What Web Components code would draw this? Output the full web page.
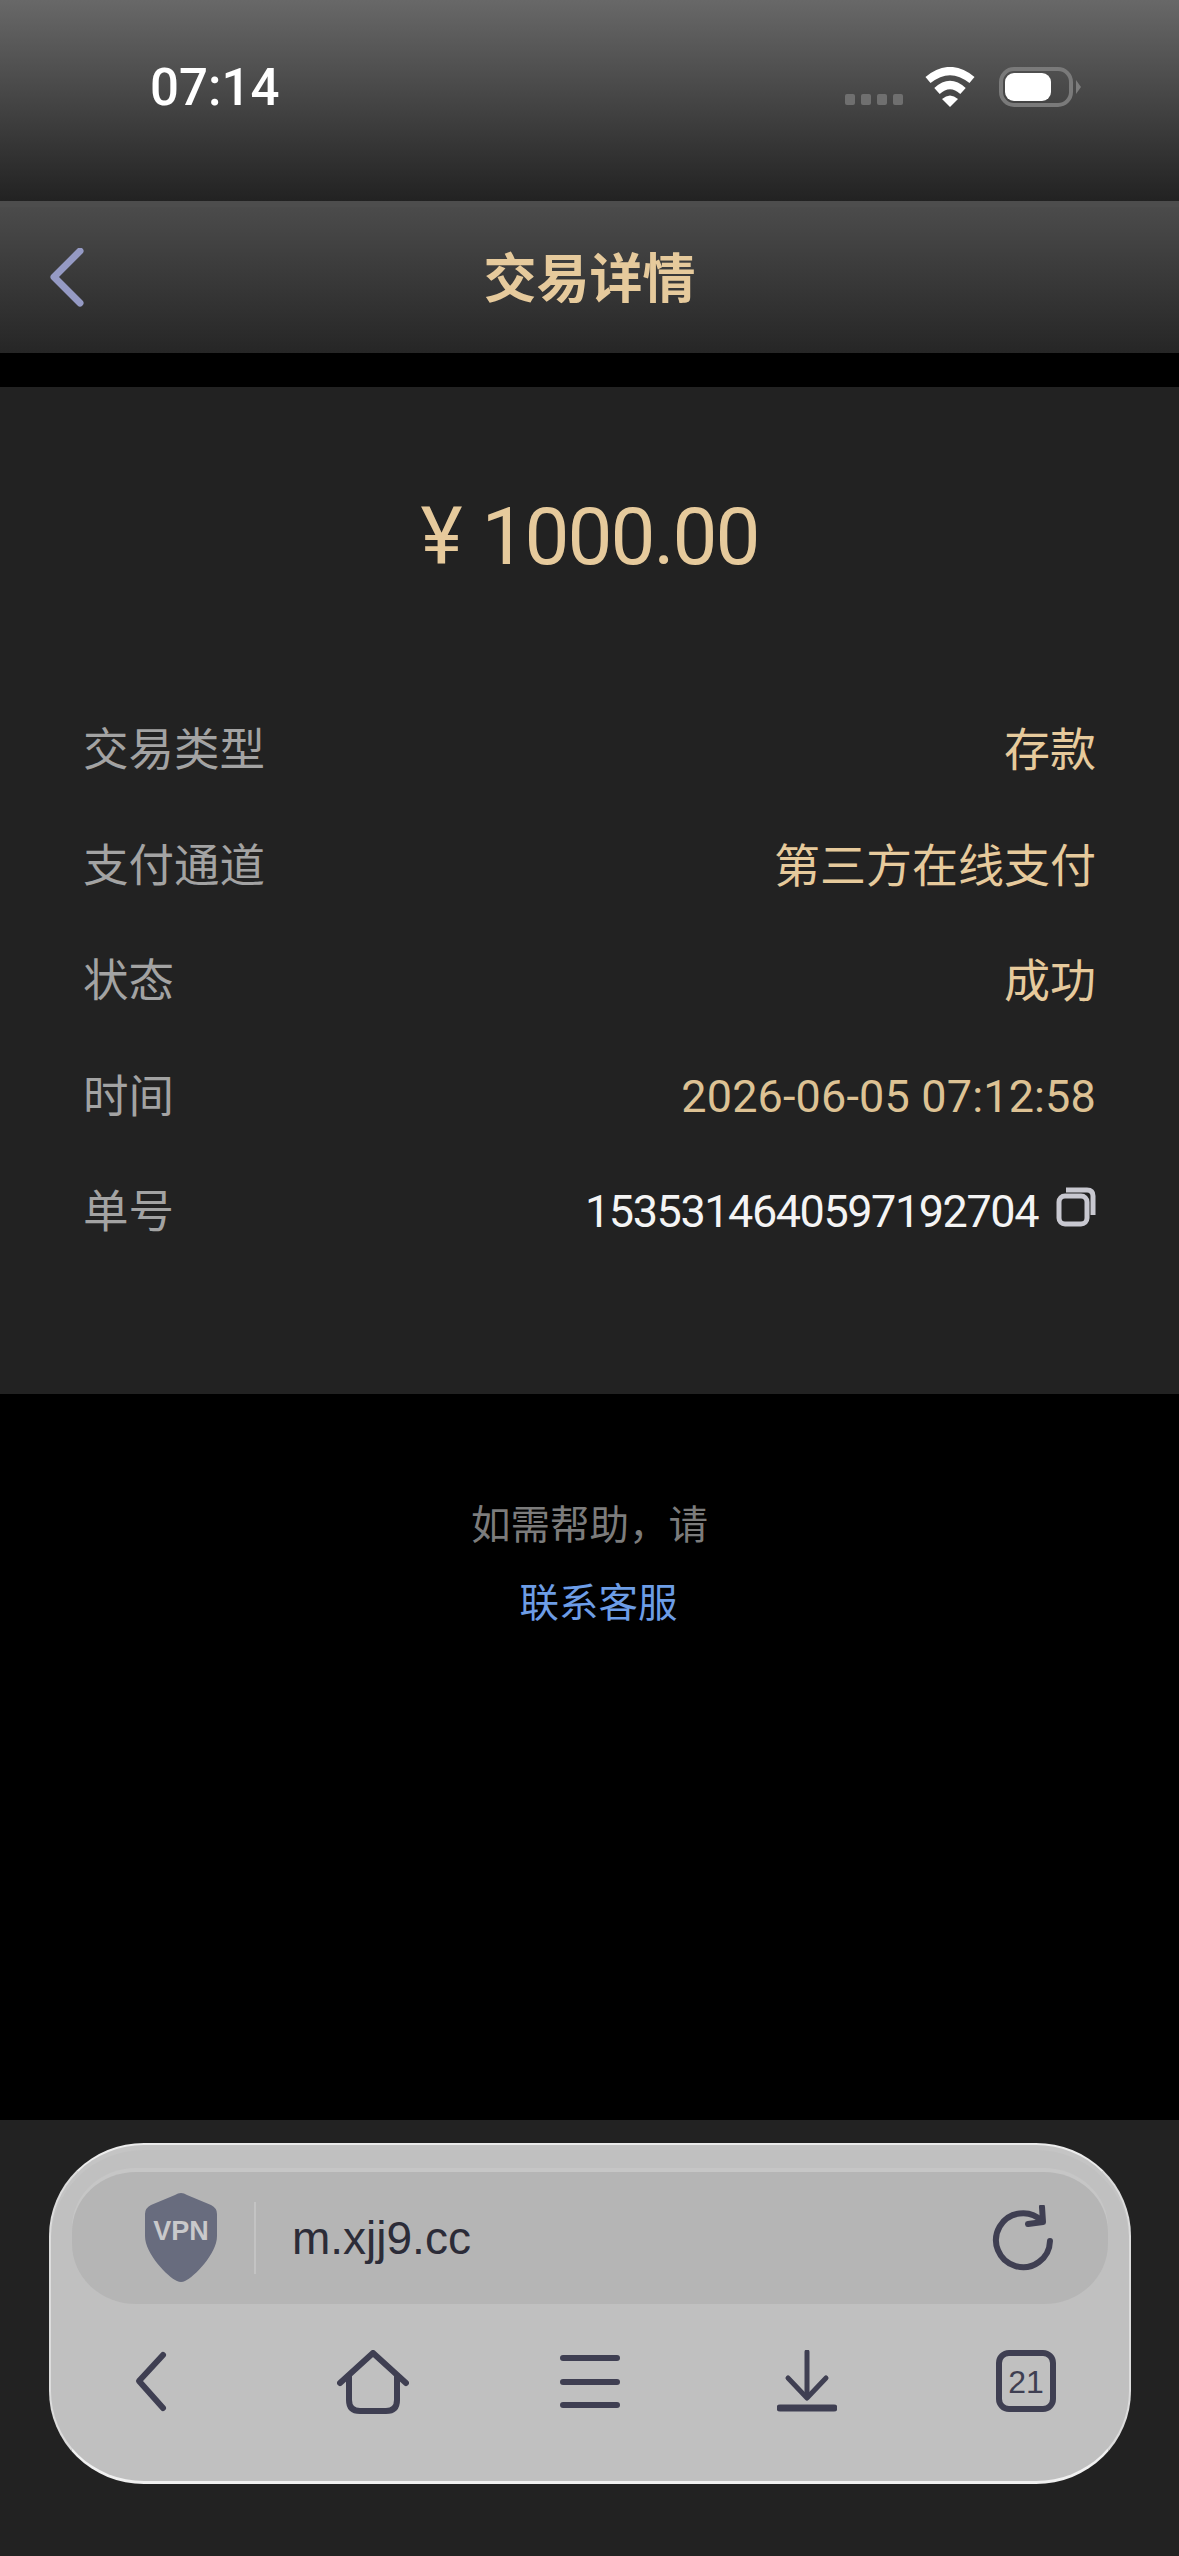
<!DOCTYPE html>
<html lang="zh">
<head>
<meta charset="utf-8">
<title>交易详情</title>
<style>
	html, body { margin: 0; padding: 0; background: #000; }
	body {
		width: 1179px;
		height: 2556px;
		display: flex;
		flex-direction: column;
		overflow: hidden;
		font-family: "Noto Sans CJK SC", "Roboto", sans-serif;
	}
	help-note { flex: 1; }
</style>
</head>
<body>
<status-bar time="07:14"></status-bar>
<nav-bar>交易详情</nav-bar>
<detail-card amount="¥ 1000.00">
	<detail-row label="交易类型">存款</detail-row>
	<detail-row label="支付通道">第三方在线支付</detail-row>
	<detail-row label="状态">成功</detail-row>
	<detail-row label="时间" variant="time">2026-06-05 07:12:58</detail-row>
	<detail-row label="单号" variant="id" copyable>1535314640597192704</detail-row>
</detail-card>
<help-note></help-note>
<browser-bar url="m.xjj9.cc" tabs="21"></browser-bar>

<script>
class StatusBar extends HTMLElement {
	connectedCallback() {
		this.attachShadow( { mode: 'open' } );
		this.shadowRoot.innerHTML = `
			<style>
				:host {
					display: flex;
					align-items: center;
					height: 201px;
					box-sizing: border-box;
					padding: 0 97px 26px 150px;
					background: linear-gradient(#686868, #222222);
				}
				.time {
					flex: 1;
					font: 500 51px/60px Roboto, sans-serif;
					color: #fff;
				}
				svg { display: block; }
			</style>
			<span class="time">${ this.getAttribute( 'time' ) }</span>
			<svg width="237" height="42" viewBox="0 0 237 42">
				<g fill="#6f6f6f">
					<rect x="0" y="27" width="10" height="11" rx="2"/>
					<rect x="16" y="27" width="10" height="11" rx="2"/>
					<rect x="32" y="27" width="10" height="11" rx="2"/>
					<rect x="48" y="27" width="10" height="11" rx="2"/>
				</g>
				<g fill="none" stroke="#fff" stroke-width="8">
					<path d="M83 13Q105-5 127 13"/>
					<path d="M92 24Q105 12 118 24"/>
				</g>
				<path d="M97 32Q105 25 113 32L105 40Z" fill="#fff"/>
				<rect x="156" y="2" width="70" height="36" rx="13" fill="none" stroke="#7a7a7a" stroke-width="4"/>
				<rect x="160" y="6" width="46" height="28" rx="9" fill="#fff"/>
				<path d="M231 13L236 20L231 27Z" fill="#7c7c7c"/>
			</svg>
		`;
	}
}

class NavBar extends HTMLElement {
	connectedCallback() {
		this.attachShadow( { mode: 'open' } );
		this.shadowRoot.innerHTML = `
			<style>
				:host {
					display: flex;
					align-items: center;
					justify-content: center;
					position: relative;
					height: 146px;
					margin-bottom: 34px;
					border-top: 6px solid #4d4d4d;
					background: linear-gradient(#4b4b4b, #262626);
					font: 700 53px/1 "Noto Sans CJK SC", sans-serif;
					color: #e6ca9c;
				}
				.title { margin-top: -9px; }
				svg { position: absolute; left: 47px; top: 41px; }
			</style>
			<svg width="40" height="60" viewBox="0 0 40 60">
				<path d="M33 3L7 29L33 55" fill="none" stroke="#959ac4" stroke-width="7" stroke-linecap="round" stroke-linejoin="round"/>
			</svg>
			<span class="title"><slot></slot></span>
		`;
	}
}

class DetailCard extends HTMLElement {
	connectedCallback() {
		this.attachShadow( { mode: 'open' } );
		const [ sign, value ] = this.getAttribute( 'amount' ).split( ' ' );
		this.shadowRoot.innerHTML = `
			<style>
				:host {
					display: block;
					height: 1007px;
					box-sizing: border-box;
					padding: 100px 83px 0;
					background: #222;
				}
				.amount {
					height: 100px;
					margin-bottom: 119px;
					display: flex;
					align-items: center;
					justify-content: center;
					gap: 21px;
					font: 400 80px/100px Roboto, sans-serif;
					letter-spacing: -2px;
					color: #e6ca9c;
				}
				.rows { display: flex; flex-direction: column; gap: 35.500px; }
			</style>
			<div class="amount"><span>${ sign }</span><span>${ value }</span></div>
			<div class="rows"><slot></slot></div>
		`;
	}
}

class DetailRow extends HTMLElement {
	connectedCallback() {
		this.attachShadow( { mode: 'open' } );
		this.shadowRoot.innerHTML = `
			<style>
				:host {
					display: flex;
					align-items: center;
					justify-content: space-between;
					height: 80px;
					font: 400 45.500px/80px "Noto Sans CJK SC", sans-serif;
					color: #a3a3a3;
				}
				.value { display: flex; align-items: center; gap: 18px; font-size: 46px; color: #e6ca9c; }
				:host([variant="time"]) .text { margin-top: 8px; font: 400 45px/80px Roboto, sans-serif; letter-spacing: 0.150px; color: #ddc294; }
				:host([variant="id"]) .text { margin-top: 8px; font: 400 45px/80px Roboto, sans-serif; letter-spacing: -1.450px; color: #f4f4f4; }
				svg { display: block; margin-top: -3px; }
			</style>
			<span>${ this.getAttribute( 'label' ) }</span>
			<span class="value"><span class="text"><slot></slot></span>${ this.hasAttribute( 'copyable' ) ? `
				<svg width="40" height="40" viewBox="0 0 40 40" fill="none" stroke="#c8c8d0" stroke-width="5">
					<rect x="3" y="9" width="28" height="28" rx="6"/>
					<path d="M10 3H31Q37 3 37 9V28"/>
				</svg>` : '' }</span>
		`;
	}
}

class HelpNote extends HTMLElement {
	connectedCallback() {
		this.attachShadow( { mode: 'open' } );
		this.shadowRoot.innerHTML = `
			<style>
				:host {
					display: flex;
					flex-direction: column;
					align-items: center;
					box-sizing: border-box;
					padding-top: 97px;
					font: 400 39.500px/62px "Noto Sans CJK SC", sans-serif;
					color: #7c7c7c;
				}
				.link { margin-top: 16px; padding-left: 18px; color: #6d9de6; }
			</style>
			<span>如需帮助，请</span>
			<span class="link">联系客服</span>
		`;
	}
}

class BrowserBar extends HTMLElement {
	connectedCallback() {
		this.attachShadow( { mode: 'open' } );
		const ink = '#3f3f52';
		this.shadowRoot.innerHTML = `
			<style>
				:host {
					display: block;
					height: 436px;
					box-sizing: border-box;
					padding: 23px 48px 0 49px;
					background: #222;
				}
				.pill {
					height: 341px;
					box-sizing: border-box;
					padding: 27px 21px 0;
					border-radius: 95px / 93px;
					background: #c0c0c0;
					border: 2px solid;
					border-color: #ececec #dcdcdc #f0f0f0;
					border-width: 2px 2px 3px;
					box-shadow: inset 0 5px 0 #c4c4c4;
				}
				.url {
					display: flex;
					align-items: center;
					height: 132px;
					padding: 0 54px 0 72px;
					border-radius: 64px / 60px;
					background: #b5b5b5;
					box-shadow: 0 -4px 0 #c6c6c6;
					font: 400 46px/1 "Liberation Sans", sans-serif;
					color: #2c2c38;
				}
				.sep { width: 2px; height: 72px; margin: 0 36px 0 36px; background: #c3c3c3; }
				.addr { flex: 1; }
				.tools {
					display: grid;
					grid-template-columns: repeat(5, 217px);
					justify-content: center;
					margin: 46px -21px 0;
				}
				.tools > * { justify-self: center; position: relative; }
				.tab { left: 2px; }
				svg { display: block; }
				.tab-count {
					position: absolute;
					inset: 0;
					display: flex;
					align-items: center;
					justify-content: center;
					font: 400 32px/1 "Liberation Sans", sans-serif;
					color: ${ ink };
				}
			</style>
			<div class="pill">
				<div class="url">
					<svg width="74" height="92" viewBox="0 0 74 92">
						<path d="M37 1Q40 1 43 3L67 13Q73 16 73 22V44C73 62 50 85 41 89Q37 91 33 89C24 85 1 62 1 44V22Q1 16 7 13L31 3Q34 1 37 1Z" fill="#686c7e"/>
						<text x="37" y="48" text-anchor="middle" font-family="Liberation Sans" font-weight="700" font-size="27" fill="#c9c9cb">VPN</text>
					</svg>
					<span class="sep"></span>
					<span class="addr">${ this.getAttribute( 'url' ) }</span>
					<svg width="62" height="66" viewBox="0 0 62 66" fill="none" stroke="${ ink }" stroke-width="6" stroke-linecap="round" stroke-linejoin="round">
						<path d="M50 16A27 27 0 1 0 58 36"/>
						<path d="M50 2L51 17L36 19"/>
					</svg>
				</div>
				<div class="tools">
					<svg width="70" height="64" viewBox="0 0 70 64" fill="none" stroke="${ ink }" stroke-width="6" stroke-linecap="round" stroke-linejoin="round">
						<path d="M42 5L18 31L42 58"/>
					</svg>
					<svg width="72" height="64" viewBox="0 0 72 64" fill="none" stroke="${ ink }" stroke-width="6" stroke-linecap="round" stroke-linejoin="round">
						<path d="M3 33L36 3L69 33"/>
						<path d="M12 26V50Q12 61 23 61H49Q60 61 60 50V26"/>
					</svg>
					<svg width="60" height="64" viewBox="0 0 60 64" fill="${ ink }">
						<rect x="0" y="5" width="60" height="6" rx="3"/>
						<rect x="0" y="29" width="60" height="6" rx="3"/>
						<rect x="0" y="52" width="60" height="6" rx="3"/>
					</svg>
					<svg width="60" height="64" viewBox="0 0 60 64" fill="none" stroke="${ ink }" stroke-width="5" stroke-linecap="round" stroke-linejoin="round">
						<path d="M30 2V46"/>
						<path d="M11 28L30 48L49 28"/>
						<path d="M3 58H57" stroke-width="7"/>
					</svg>
					<div class="tab">
						<svg width="60" height="62" viewBox="0 0 60 62" fill="none" stroke="${ ink }" stroke-width="6">
							<rect x="3" y="3" width="54" height="56" rx="10"/>
						</svg>
						<span class="tab-count">${ this.getAttribute( 'tabs' ) }</span>
					</div>
				</div>
			</div>
		`;
	}
}

customElements.define( 'status-bar', StatusBar );
customElements.define( 'nav-bar', NavBar );
customElements.define( 'detail-card', DetailCard );
customElements.define( 'detail-row', DetailRow );
customElements.define( 'help-note', HelpNote );
customElements.define( 'browser-bar', BrowserBar );
</script>
</body>
</html>
